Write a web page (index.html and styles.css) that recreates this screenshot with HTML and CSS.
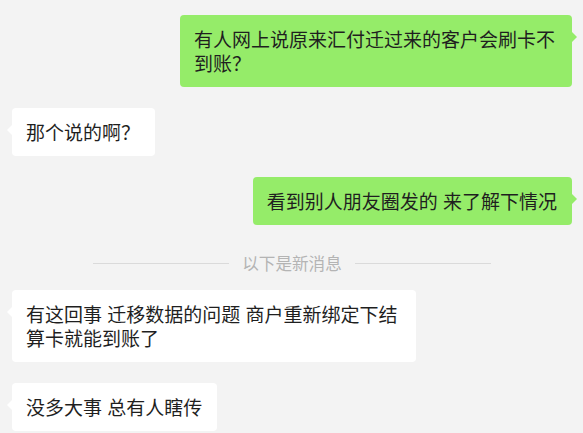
FILE: index.html
```html
<!DOCTYPE html>
<html lang="zh-CN">
<head>
	<meta charset="UTF-8">
	<title>聊天记录</title>
	<link rel="stylesheet" href="styles.css">
</head>
<body>
	<div class="chat">
		<div class="msg msg-self">
			<div class="bubble bubble-narrow">有人网上说原来汇付迁过来的客户会刷卡不到账？</div>
		</div>
		<div class="msg msg-other">
			<div class="bubble">那个说的啊？</div>
		</div>
		<div class="msg msg-self">
			<div class="bubble">看到别人朋友圈发的 来了解下情况</div>
		</div>
		<div class="divider">
			<span class="divider-line"></span>
			<span class="divider-text">以下是新消息</span>
			<span class="divider-line"></span>
		</div>
		<div class="msg msg-other msg-after-divider">
			<div class="bubble">有这回事 迁移数据的问题 商户重新绑定下结算卡就能到账了</div>
		</div>
		<div class="msg msg-other">
			<div class="bubble">没多大事 总有人瞎传</div>
		</div>
	</div>
</body>
</html>
```

FILE: styles.css
```css
html, body {
	margin: 0;
	padding: 0;
	height: 100%;
}
body {
	background-color: #f3f3f3;
	font-family: "Noto Sans CJK SC", "Noto Sans", sans-serif;
	color: #1f1f1f;
	overflow: hidden;
}
.chat {
	display: flex;
	flex-direction: column;
	padding: 15px 11px 0 12px;
}
.msg {
	display: flex;
	margin-top: 21px;
}
.msg:first-child {
	margin-top: 0;
}
.msg-self {
	justify-content: flex-end;
}
.msg-other {
	justify-content: flex-start;
}
.msg-after-divider {
	margin-top: 15px;
}
.bubble {
	position: relative;
	box-sizing: border-box;
	max-width: 404px;
	padding: 12px 15px 12px 14px;
	border-radius: 4px;
	font-size: 19px;
	line-height: 24px;
	word-spacing: 1px;
	background-color: #fff;
}
.bubble-narrow {
	max-width: 392px;
}
.bubble::before {
	content: "";
	position: absolute;
	top: 17px;
	width: 0;
	height: 0;
	border-top: 5px solid transparent;
	border-bottom: 5px solid transparent;
}
.msg-other .bubble::before {
	left: -5px;
	border-right: 5px solid #fff;
}
.msg-self .bubble {
	background-color: #95ec69;
}
.msg-self .bubble::before {
	right: -5px;
	border-left: 5px solid #95ec69;
}
.divider {
	display: flex;
	align-items: center;
	justify-content: center;
	gap: 13px;
	height: 24px;
	margin-top: 26px;
}
.divider-line {
	width: 136px;
	height: 1px;
	background-color: #dadada;
}
.divider-text {
	font-size: 16.6px;
	color: #b4b4b4;
	white-space: nowrap;
}
```
